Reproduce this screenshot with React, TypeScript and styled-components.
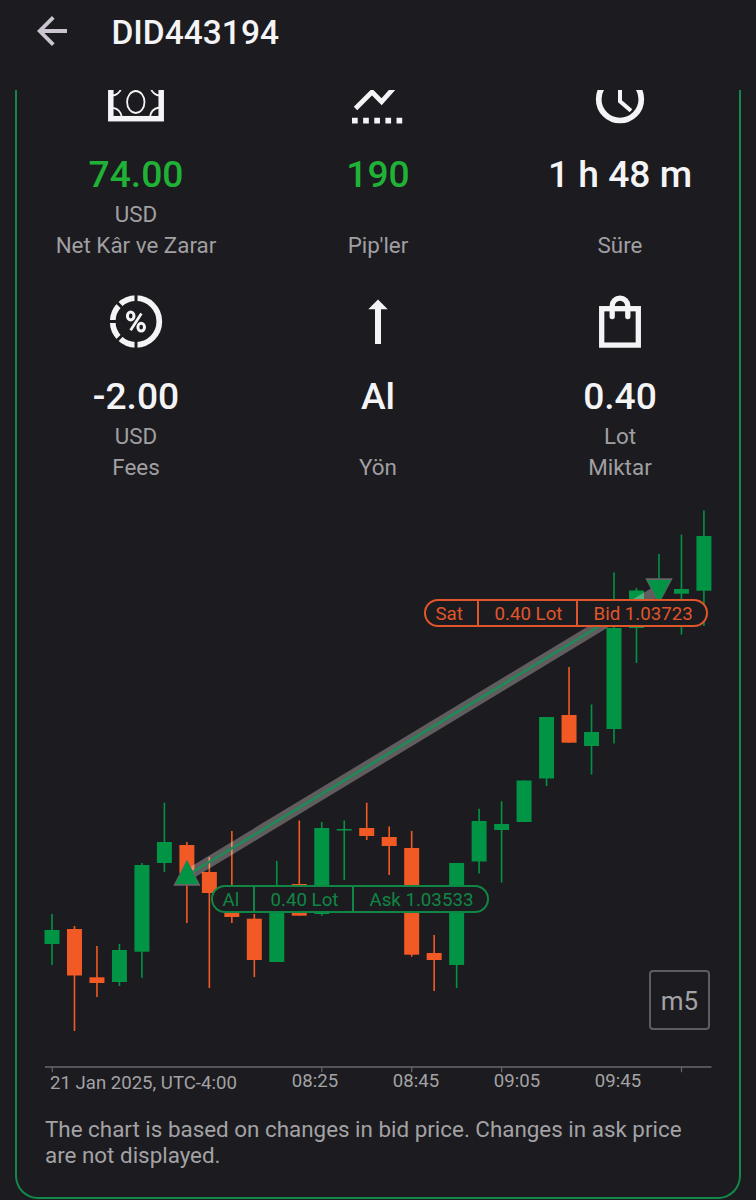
import React from 'react';
import styled, { createGlobalStyle } from 'styled-components';

const BG = '#1c1b1f';
const GREEN = '#019444';
const ORANGE = '#f15a24';
const WHITE = '#f4f4f6';

const GlobalStyle = createGlobalStyle`
  html, body { margin: 0; padding: 0; background: ${BG}; }
  body { font-family: Roboto, "Liberation Sans", sans-serif; overflow: hidden; }
  svg { display: block; }
`;

const Screen = styled.div`
  width: 756px;
  height: 1200px;
  display: flex;
  flex-direction: column;
  background: ${BG};
  overflow: hidden;
`;

const Header = styled.header`
  height: 90px;
  flex: none;
  display: flex;
  align-items: flex-start;
  padding: 11px 0 0 32px;
  box-sizing: border-box;
  gap: 39.5px;
`;

const Title = styled.h1`
  margin: 0;
  padding-top: 2px;
  font-size: 33.5px;
  line-height: 40px;
  font-weight: 500;
  color: ${WHITE};
`;

const Card = styled.main`
  box-sizing: border-box;
  height: 1109px;
  margin: 0 15px;
  display: flex;
  flex-direction: column;
  border: 2px solid #12894a;
  border-top: 0;
  border-radius: 0 0 23px 23px;
  overflow: hidden;
`;

const Stats = styled.section`
  display: grid;
  grid-template-columns: repeat(3, 242px);
  row-gap: 30px;
  margin: -22px -2px 0;
`;

const Stat = styled.div`
  display: flex;
  flex-direction: column;
  align-items: center;
`;

const Value = styled.div<{ $positive?: boolean }>`
  margin: 22px 0 3px;
  font-size: 37.2px;
  line-height: 44px;
  font-weight: 500;
  white-space: nowrap;
  color: ${(p) => (p.$positive ? '#20b236' : WHITE)};
`;

const Caption = styled.div`
  height: 30px;
  font-size: 22.4px;
  line-height: 30px;
  white-space: nowrap;
  color: #a09fa2;
  & + & { margin-top: 1px; }
`;

const Chart = styled.section`
  position: relative;
  flex: none;
  height: 600px;
  margin-top: 18px;
`;

const AxisText = styled.text`
  font-size: 18.6px;
  fill: #a3a2a5;
`;

const Tag = styled.div<{ $color: string; $x: number; $y: number }>`
  position: absolute;
  left: ${(p) => p.$x}px;
  top: ${(p) => p.$y}px;
  display: flex;
  box-sizing: border-box;
  height: 28px;
  border: 2px solid ${(p) => p.$color};
  border-radius: 14px;
  background: ${BG};
  color: ${(p) => p.$color};
  font-size: 18.7px;
  line-height: 26px;
`;

const TagPart = styled.span<{ $w: number; $pad: number }>`
  box-sizing: border-box;
  width: ${(p) => p.$w}px;
  padding-left: ${(p) => p.$pad}px;
  white-space: nowrap;
  & + & { border-left: 2px solid currentColor; }
`;

const Period = styled.div`
  position: absolute;
  left: 632px;
  top: 470px;
  width: 61px;
  height: 60px;
  box-sizing: border-box;
  border: 2px solid #5d5c60;
  border-radius: 4px;
  text-align: center;
  font-size: 26px;
  line-height: 58px;
  color: #a3a2a5;
`;

const Note = styled.p`
  margin: 16px 0 0;
  padding-left: 28px;
  width: 670px;
  font-size: 22.4px;
  line-height: 26.4px;
  color: #a3a2a5;
`;

const BackIcon = () => (
  <svg width="40" height="40" viewBox="32 11 40 40" fill="none" stroke="#cbc5d0" strokeWidth="3.8">
    <path d="M67 31H40M53.3 17.3L39.7 31L53.3 44.7" />
  </svg>
);

const MoneyIcon = () => (
  <svg width="62" height="62" viewBox="105 68 62 62" fill="none" stroke={WHITE}>
    <rect x="110.8" y="84.3" width="50.4" height="34.4" strokeWidth="5.5" />
    <ellipse cx="135.8" cy="102" rx="8.7" ry="11" strokeWidth="1.8" />
    <path
      strokeWidth="1.8"
      d="M113 95.5Q119.5 94.5 121.5 87.5M159 95.5Q152.5 94.5 150.5 87.5M113 107.8Q120.5 109 121.8 117M159 107.5Q151 109 150 117"
    />
  </svg>
);

const PipsIcon = () => (
  <svg width="62" height="62" viewBox="347 68 62 62" fill="none" stroke={WHITE}>
    <path strokeWidth="4.8" d="M355.5 108.5L372 92L381.6 101.8L396 85.5" />
    <path strokeWidth="5.8" strokeDasharray="5.7 5.43" d="M352 120.6H402.4" />
  </svg>
);

const ClockIcon = () => (
  <svg width="62" height="62" viewBox="589 68 62 62" fill="none" stroke={WHITE}>
    <circle cx="620" cy="99.2" r="21.3" strokeWidth="5.7" />
    <path strokeWidth="4" d="M620 86V101.3L631 110.7" />
  </svg>
);

const FeesIcon = () => (
  <svg width="62" height="62" viewBox="105 290 62 62" fill="none">
    <circle cx="136" cy="321.5" r="23.3" stroke={WHITE} strokeWidth="5.7" />
    <path
      stroke={BG}
      strokeWidth="3"
      d="M136 293V302M136 341V350M108 321.5H117M115.5 301L122.5 308M115.5 342L122.5 335"
    />
    <g stroke={WHITE} strokeWidth="3">
      <ellipse cx="130.7" cy="316" rx="3.3" ry="3.9" />
      <ellipse cx="141.2" cy="327.2" rx="3.3" ry="3.9" />
      <path strokeWidth="2.7" d="M141.4 313.4L130.6 330.2" />
    </g>
  </svg>
);

const UpIcon = () => (
  <svg width="62" height="62" viewBox="347 290 62 62" fill={WHITE}>
    <path d="M378 299.5L387.7 309.3H381V344H375V309.3H368.3Z" />
  </svg>
);

const BagIcon = () => (
  <svg width="62" height="62" viewBox="589 290 62 62" fill="none" stroke={WHITE} strokeWidth="5.3">
    <rect x="601.7" y="308.7" width="36.6" height="36.4" />
    <path strokeLinecap="round" d="M612.2 316.5V306A7.8 7.8 0 0 1 627.8 306V316.5" />
  </svg>
);

type StatItem = { icon: React.ReactNode; value: string; unit?: string; label: string; positive?: boolean };

const stats: StatItem[] = [
  { icon: <MoneyIcon />, value: '74.00', unit: 'USD', label: 'Net Kâr ve Zarar', positive: true },
  { icon: <PipsIcon />, value: '190', label: "Pip'ler", positive: true },
  { icon: <ClockIcon />, value: '1 h 48 m', label: 'Süre' },
  { icon: <FeesIcon />, value: '-2.00', unit: 'USD', label: 'Fees' },
  { icon: <UpIcon />, value: 'Al', label: 'Yön' },
  { icon: <BagIcon />, value: '0.40', unit: 'Lot', label: 'Miktar' },
];

// [rising, high, body top, body bottom, low]
const candles: [number, number, number, number, number][] = [
  [1, 914, 930, 944, 965],
  [0, 926, 929, 975.5, 1031],
  [0, 946, 977.3, 983, 997],
  [1, 944, 950, 982, 986],
  [1, 863, 865, 951.7, 977.7],
  [1, 802.7, 842, 863, 872],
  [0, 842, 845, 873, 923],
  [0, 857, 872, 893, 988],
  [0, 831, 900, 917, 923],
  [0, 914, 918.7, 960, 977],
  [1, 861, 890, 962, 962],
  [0, 820.5, 884, 915.7, 915.7],
  [1, 822, 828, 914, 915.7],
  [1, 820.5, 829, 830.5, 880],
  [0, 802.7, 828, 836, 840],
  [0, 826.5, 837, 846, 875],
  [0, 831, 848, 954.7, 956.7],
  [0, 935, 953, 960, 991],
  [1, 863, 863, 965, 988],
  [1, 808.7, 821, 861.5, 873.5],
  [1, 801.3, 824, 830, 882.5],
  [1, 780.5, 780.5, 822, 822],
  [1, 717, 717, 778.5, 786],
  [0, 667, 715, 742.7, 742.7],
  [1, 704.5, 732, 746, 774.5],
  [1, 572.5, 628, 729, 743.5],
  [1, 588, 590.5, 628, 663],
  [1, 554, 602, 610, 610],
  [1, 534.5, 589, 593.7, 634.5],
  [1, 510.5, 536, 590.7, 626],
];

const CandleChart = () => (
  <svg width="722" height="600" viewBox="17 500 722 600">
    {candles.map(([up, high, top, bottom, low], i) => {
      const x = 52 + i * 22.48;
      return (
        <g key={i} fill={up ? GREEN : ORANGE}>
          <rect x={x - 0.8} y={high} width={1.6} height={low - high} />
          <rect x={x - 7.5} y={top} width={15} height={bottom - top} />
        </g>
      );
    })}
    <path d="M187 875.5L659 590" stroke="#fff9f6" strokeOpacity="0.3" strokeWidth="11.3" />
    <path d="M187 875.5L640 601.5" stroke="#1d8a58" strokeWidth="2.6" />
    <path d="M187 859.5L200.5 885.7H173.3Z" fill="#676567" />
    <path d="M187 860.5L198.5 884H175.5Z" fill={GREEN} />
    <path d="M645.3 578.2H672.7L659 604Z" fill="#676567" />
    <path d="M647.5 580H670.5L659 603Z" fill={GREEN} />
    <g stroke="#69686b" strokeWidth="1.5">
      <path d="M45 1067H711.5" />
      <path strokeWidth="1.2" d="M52.3 1067V1072.3M321.8 1067V1072.3M411.7 1067V1072.3M501.6 1067V1072.3M681.5 1067V1072.3" />
    </g>
    <AxisText x="50" y="1089.3">21 Jan 2025, UTC-4:00</AxisText>
    <AxisText x="315" y="1087" textAnchor="middle">08:25</AxisText>
    <AxisText x="416" y="1087" textAnchor="middle">08:45</AxisText>
    <AxisText x="517" y="1087" textAnchor="middle">09:05</AxisText>
    <AxisText x="618" y="1087" textAnchor="middle">09:45</AxisText>
  </svg>
);

export default function App() {
  return (
    <>
      <GlobalStyle />
      <Screen>
        <Header>
          <BackIcon />
          <Title>DID443194</Title>
        </Header>
        <Card>
          <Stats>
            {stats.map((s) => (
              <Stat key={s.label}>
                {s.icon}
                <Value $positive={s.positive}>{s.value}</Value>
                <Caption>{s.unit}</Caption>
                <Caption>{s.label}</Caption>
              </Stat>
            ))}
          </Stats>
          <Chart>
            <CandleChart />
            <Tag $color="#e0562a" $x={406.5} $y={99}>
              <TagPart $w={51.5} $pad={10}>Sat</TagPart>
              <TagPart $w={99} $pad={15.5}>0.40 Lot</TagPart>
              <TagPart $w={130} $pad={15.5}>Bid 1.03723</TagPart>
            </Tag>
            <Tag $color="#0f8744" $x={193.5} $y={385}>
              <TagPart $w={40.5} $pad={10}>Al</TagPart>
              <TagPart $w={99} $pad={15.5}>0.40 Lot</TagPart>
              <TagPart $w={135} $pad={15.5}>Ask 1.03533</TagPart>
            </Tag>
            <Period>m5</Period>
          </Chart>
          <Note>The chart is based on changes in bid price. Changes in ask price are not displayed.</Note>
        </Card>
      </Screen>
    </>
  );
}
